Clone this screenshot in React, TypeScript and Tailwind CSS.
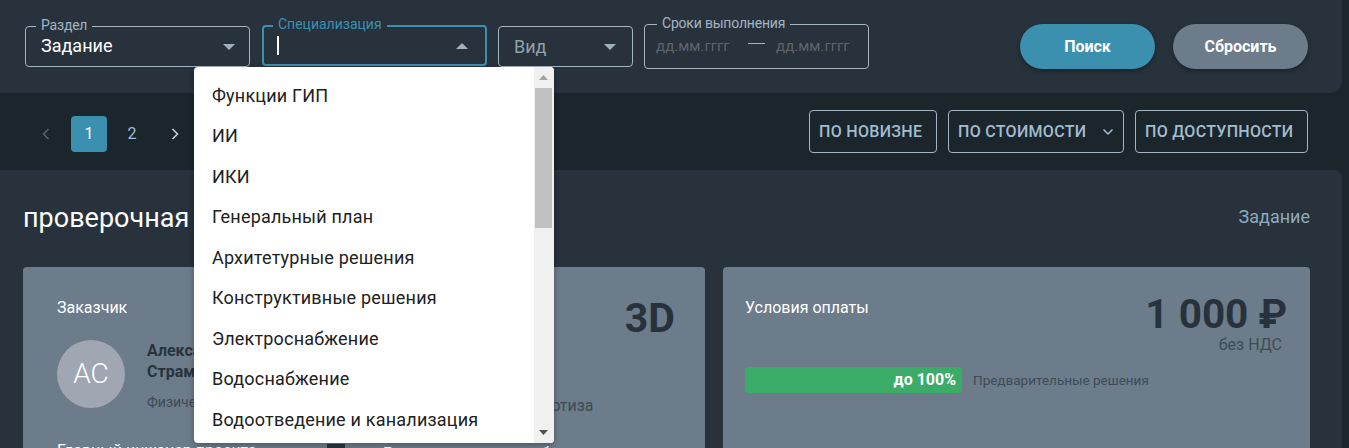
import React from "react";

const items = [
  "Функции ГИП",
  "ИИ",
  "ИКИ",
  "Генеральный план",
  "Архитетурные решения",
  "Конструктивные решения",
  "Электроснабжение",
  "Водоснабжение",
  "Водоотведение и канализация",
];

function Caret({ up, color = "#9fb0bf" }: { up?: boolean; color?: string }) {
  return (
    <svg width="12" height="6" viewBox="0 0 12 6" className="shrink-0">
      <path d={up ? "M0 6 L6 0 L12 6 Z" : "M0 0 L6 6 L12 0 Z"} fill={color} />
    </svg>
  );
}

function Field({ label, labelClass = "left-[10px]", children, className }: { label?: string; labelClass?: string; children: React.ReactNode; className: string }) {
  return (
    <div className={`relative rounded-[4px] border border-[#a3b4c2] ${className}`}>
      {label && (
        <span className={`absolute top-[-10px] bg-[#28323c] px-[5px] text-[14px] leading-[17px] tracking-[-0.2px] text-[#a3b4c2] ${labelClass}`}>{label}</span>
      )}
      {children}
    </div>
  );
}

function SortBtn({ children, className }: { children: React.ReactNode; className: string }) {
  return (
    <button className={`flex h-[43px] items-center rounded-[4px] border border-[#a3b4c2] px-[9px] text-[16px] font-medium tracking-[0.3px] text-[#a3bccf] ${className}`}>
      {children}
    </button>
  );
}

export default function App() {
  return (
    <div className="relative h-[448px] w-[1349px] overflow-hidden bg-[#1b252c] font-['Roboto',sans-serif]">
      <div className="flex h-[93px] w-[1342px] items-start rounded-br-[12px] bg-[#28323c] pl-[25px] pt-[24px]">
        <Field label="Раздел" className="mt-[2px] flex h-[41px] w-[225px] items-center justify-between pl-[15px] pr-[14px]">
          <span className="mb-[2px] text-[18px] text-white">Задание</span>
          <Caret />
        </Field>
        <div className="relative ml-[12px] mt-[1px] flex h-[41px] w-[225px] items-center justify-between rounded-[4px] border-2 border-[#3b90b0] pl-[13px] pr-[17px]">
          <span className="absolute left-[9px] top-[-11px] bg-[#28323c] px-[5px] text-[14px] leading-[17px] text-[#3b90b0]">Специализация</span>
          <span className="h-[19px] w-[2px] bg-white" />
          <Caret up />
        </div>
        <Field className="ml-[11px] mt-[2px] flex h-[41px] w-[135px] items-center justify-between pl-[15px] pr-[16px]">
          <span className="text-[18px] text-[#8fa0ae]">Вид</span>
          <Caret />
        </Field>
        <Field label="Сроки выполнения" labelClass="left-[12px]" className="ml-[11px] flex h-[45px] w-[225px] items-center pl-[11px]">
          <span className="w-[72px] text-[15px] text-[#5c646c]">дд.мм.гггг</span>
          <span className="mb-[7px] ml-[20px] h-px w-[17px] bg-[#a3b4c2]" />
          <span className="ml-[11px] text-[15px] text-[#5c646c]">дд.мм.гггг</span>
        </Field>
        <button className="ml-[151px] h-[45px] w-[135px] rounded-full bg-[#3b90b0] text-[16px] font-bold text-white shadow-[0_2px_5px_rgba(0,0,0,0.35)]">Поиск</button>
        <button className="ml-[18px] h-[45px] w-[135px] rounded-full bg-[#6c7c8a] text-[16px] font-bold text-white shadow-[0_2px_5px_rgba(0,0,0,0.35)]">Сбросить</button>
      </div>

      <div className="flex h-[77px] items-start pt-[17px]">
        <div className="flex h-[43px] items-center pl-[41px] pt-[5px]">
          <svg width="10" height="12" viewBox="0 0 10 12" fill="none" stroke="#56636e" strokeWidth="1.6"><path d="M7.5 1 L2.5 6 L7.5 11" /></svg>
          <span className="ml-[20px] flex h-[36px] w-[36px] items-center justify-center rounded-[4px] bg-[#3b90b0] text-[16px] text-white">1</span>
          <span className="ml-px flex h-[36px] w-[48px] items-center justify-center text-[16px] text-[#a3bccf]">2</span>
          <svg className="ml-[14px]" width="10" height="12" viewBox="0 0 10 12" fill="none" stroke="#c3d0db" strokeWidth="1.6"><path d="M2.5 1 L7.5 6 L2.5 11" /></svg>
        </div>
        <div className="ml-auto mr-[41px] flex gap-[11px]">
          <SortBtn className="w-[128px]">ПО НОВИЗНЕ</SortBtn>
          <SortBtn className="w-[176px] justify-between">
            ПО СТОИМОСТИ
            <svg width="12" height="8" viewBox="0 0 12 8" fill="none" stroke="#a3bccf" strokeWidth="1.5"><path d="M1.5 1.5 L6 6 L10.5 1.5" /></svg>
          </SortBtn>
          <SortBtn className="w-[173px]">ПО ДОСТУПНОСТИ</SortBtn>
        </div>
      </div>

      <div className="h-[278px] w-[1342px] rounded-tr-[8px] bg-[#28323c] pl-[23px] pr-[32px]">
        <div className="flex h-[97px] items-start justify-between pt-[32px]">
          <span className="text-[27px] leading-[32px] text-white">проверочная</span>
          <span className="mt-[3px] text-[18px] leading-[24px] text-[#8fa8bb]">Задание</span>
        </div>
        <div className="flex gap-[18px]">
          <div className="relative h-[300px] w-[682px] rounded-[4px] bg-[#6c7c8a] pl-[34px] pt-[31px]">
            <div className="text-[16px] leading-[20px] text-white">Заказчик</div>
            <span className="absolute right-[30px] top-[26px] text-[41px] font-bold leading-[50px] text-[#28323c]">3D</span>
            <div className="mt-[22px] flex">
              <div className="flex h-[68px] w-[68px] items-center justify-center rounded-full bg-[#a0a7b3] text-[28px] font-light text-white">АС</div>
              <div className="ml-[22px]">
                <div className="text-[16px] font-bold leading-[21px] text-[#28323c]">Александр<br />Страмилов</div>
                <div className="mt-[11px] text-[14px] leading-[18px] text-[#3f4b56]">Физическое лицо</div>
              </div>
            </div>
            <span className="absolute left-[483px] top-[129px] text-[16px] leading-[20px] text-[#3f4b56]">Экспертиза</span>
            <div className="absolute left-[34px] top-[174px] text-[16px] leading-[20px] text-white">Главный инженер проекта</div>
            <div className="absolute left-[304px] top-[177px] h-[40px] w-[18px] bg-[#28323c]" />
            <div className="absolute left-[358px] top-[177px] text-[16px] leading-[20px] text-white">Дополнительные требования</div>
          </div>
          <div className="h-[300px] w-[587px] rounded-[4px] bg-[#6c7c8a] pl-[22px] pr-[23px] pt-[26px]">
            <div className="flex items-start justify-between">
              <span className="mt-[5px] text-[16px] leading-[20px] text-white">Условия оплаты</span>
              <div className="flex flex-col items-end">
                <span className="text-[40.5px] font-bold leading-[42px] text-[#28323c]">1 000 ₽</span>
                <span className="mr-[5px] text-[16px] leading-[20px] text-[#3f4b56]">без НДС</span>
              </div>
            </div>
            <div className="mt-[12px] flex items-center">
              <div className="flex h-[26px] w-[217px] items-center justify-end rounded-[4px] bg-[#3bab68] pr-[6px] text-[16px] font-bold text-white">до 100%</div>
              <span className="ml-[11px] text-[13.5px] text-[#3f4b56]">Предварительные решения</span>
            </div>
          </div>
        </div>
      </div>

      <div className="absolute left-[194px] top-[67px] flex h-[376px] w-[360px] overflow-hidden rounded-[4px] bg-white shadow-[0_2px_6px_rgba(0,0,0,0.3)]">
        <ul className="flex-1 pl-[18px] pt-[8px]">
          {items.map((t) => (
            <li key={t} className="flex h-[40.5px] items-center text-[18px] tracking-[0.2px] text-[#212121]">{t}</li>
          ))}
        </ul>
        <div className="flex w-[20px] flex-col items-center bg-[#f0f0f0] pl-[1px] pr-[2px]">
          <div className="flex h-[21px] items-center justify-center">
            <svg width="9" height="5" viewBox="0 0 9 5"><path d="M0 5 L4.5 0 L9 5 Z" fill="#a3a3a3" /></svg>
          </div>
          <div className="h-[140px] w-full bg-[#c1c1c1]" />
          <div className="mt-auto flex h-[21px] items-center justify-center">
            <svg width="9" height="5" viewBox="0 0 9 5"><path d="M0 0 L4.5 5 L9 0 Z" fill="#505050" /></svg>
          </div>
        </div>
      </div>
    </div>
  );
}
